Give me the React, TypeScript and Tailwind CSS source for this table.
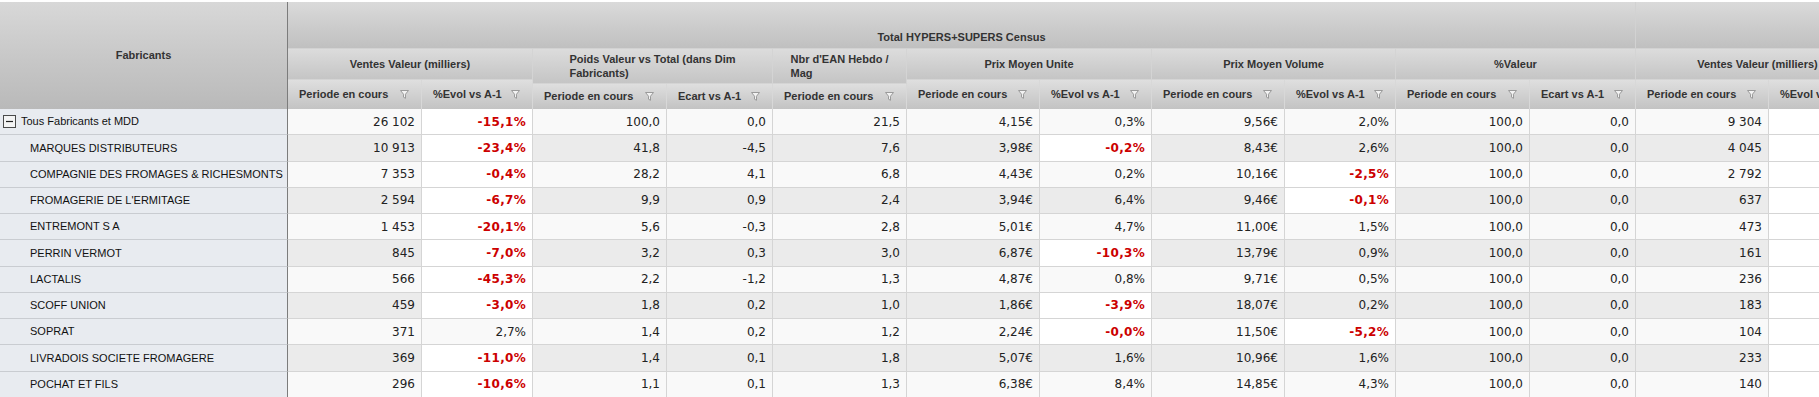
import React from "react";

const Funnel = () => (
  <svg width="9" height="9" viewBox="0 0 9 9" className="shrink-0">
    <path d="M0.5 0.5 H8.5 L5.5 4.2 V8.3 L3.5 7.2 V4.2 Z" fill="#f2f2f2" stroke="#9a9a9a" strokeWidth="1" strokeLinejoin="round" />
  </svg>
);

const MinusBox = () => (
  <svg width="13" height="13" viewBox="0 0 13 13" className="shrink-0">
    <rect x="0.5" y="0.5" width="12" height="12" fill="#f4f4f4" stroke="#4a4a4a" />
    <line x1="3" y1="6.5" x2="10" y2="6.5" stroke="#222" strokeWidth="1.2" />
  </svg>
);

const W = [
  "w-[134px]",
  "w-[111px]",
  "w-[134px]",
  "w-[106px]",
  "w-[134px]",
  "w-[133px]",
  "w-[112px]",
  "w-[133px]",
  "w-[111px]",
  "w-[134px]",
  "w-[106px]",
  "w-[133px]",
  "w-[111px]",
];

type Sub = { label: string; w: string };

const SubHead = ({ s }: { s: Sub }) => (
  <div
    className={`${s.w} shrink-0 h-full flex items-center justify-between pl-[11px] pr-[12px] bg-linear-to-b from-[#dfdfdf] to-[#c3c3c3] border-r border-[#d8d8d8]`}
  >
    <span className="whitespace-nowrap">{s.label}</span>
    <Funnel />
  </div>
);

const Group = ({
  title,
  subs,
  tall,
}: {
  title: React.ReactNode;
  subs: Sub[];
  tall?: boolean;
}) => (
  <div className="flex flex-col shrink-0">
    <div
      className={`${tall ? "h-[35px]" : "h-[31px]"} flex items-center justify-center px-2 bg-linear-to-b from-[#dcdcdc] to-[#c5c5c5] border-r border-b border-[#d4d4d4]`}
    >
      {title}
    </div>
    <div className={`${tall ? "h-[25px]" : "h-[29px]"} flex`}>
      {subs.map((s, i) => (
        <SubHead key={i} s={s} />
      ))}
    </div>
  </div>
);

type Cell = { v: string; r?: boolean };
const c = (v: string): Cell => ({ v });
const r = (v: string): Cell => ({ v, r: true });

const rows: { label: string; top?: boolean; cells: Cell[] }[] = [
  { label: "Tous Fabricants et MDD", top: true, cells: [c("26 102"), r("-15,1%"), c("100,0"), c("0,0"), c("21,5"), c("4,15€"), c("0,3%"), c("9,56€"), c("2,0%"), c("100,0"), c("0,0"), c("9 304")] },
  { label: "MARQUES DISTRIBUTEURS", cells: [c("10 913"), r("-23,4%"), c("41,8"), c("-4,5"), c("7,6"), c("3,98€"), r("-0,2%"), c("8,43€"), c("2,6%"), c("100,0"), c("0,0"), c("4 045")] },
  { label: "COMPAGNIE DES FROMAGES & RICHESMONTS", cells: [c("7 353"), r("-0,4%"), c("28,2"), c("4,1"), c("6,8"), c("4,43€"), c("0,2%"), c("10,16€"), r("-2,5%"), c("100,0"), c("0,0"), c("2 792")] },
  { label: "FROMAGERIE DE L'ERMITAGE", cells: [c("2 594"), r("-6,7%"), c("9,9"), c("0,9"), c("2,4"), c("3,94€"), c("6,4%"), c("9,46€"), r("-0,1%"), c("100,0"), c("0,0"), c("637")] },
  { label: "ENTREMONT S A", cells: [c("1 453"), r("-20,1%"), c("5,6"), c("-0,3"), c("2,8"), c("5,01€"), c("4,7%"), c("11,00€"), c("1,5%"), c("100,0"), c("0,0"), c("473")] },
  { label: "PERRIN VERMOT", cells: [c("845"), r("-7,0%"), c("3,2"), c("0,3"), c("3,0"), c("6,87€"), r("-10,3%"), c("13,79€"), c("0,9%"), c("100,0"), c("0,0"), c("161")] },
  { label: "LACTALIS", cells: [c("566"), r("-45,3%"), c("2,2"), c("-1,2"), c("1,3"), c("4,87€"), c("0,8%"), c("9,71€"), c("0,5%"), c("100,0"), c("0,0"), c("236")] },
  { label: "SCOFF UNION", cells: [c("459"), r("-3,0%"), c("1,8"), c("0,2"), c("1,0"), c("1,86€"), r("-3,9%"), c("18,07€"), c("0,2%"), c("100,0"), c("0,0"), c("183")] },
  { label: "SOPRAT", cells: [c("371"), c("2,7%"), c("1,4"), c("0,2"), c("1,2"), c("2,24€"), r("-0,0%"), c("11,50€"), r("-5,2%"), c("100,0"), c("0,0"), c("104")] },
  { label: "LIVRADOIS SOCIETE FROMAGERE", cells: [c("369"), r("-11,0%"), c("1,4"), c("0,1"), c("1,8"), c("5,07€"), c("1,6%"), c("10,96€"), c("1,6%"), c("100,0"), c("0,0"), c("233")] },
  { label: "POCHAT ET FILS", cells: [c("296"), r("-10,6%"), c("1,1"), c("0,1"), c("1,3"), c("6,38€"), c("8,4%"), c("14,85€"), c("4,3%"), c("100,0"), c("0,0"), c("140")] },
];

const P = "Periode en cours";
const E = "%Evol vs A-1";
const A = "Ecart vs A-1";

export default function App() {
  return (
    <div className="w-[1819px] h-[397px] overflow-hidden bg-white pt-[2px] font-['Liberation_Sans',Arial,sans-serif]">
      {/* Header */}
      <div className="flex text-[11px] font-bold text-[#333] h-[107px]">
        <div className="w-[288px] shrink-0 h-full flex items-center justify-center bg-linear-to-b from-[#d8d8d8] to-[#b9b9b9] border-r border-[#7c7c7c]">
          Fabricants
        </div>
        <div className="flex flex-col shrink-0">
          <div className="h-[47px] flex items-end justify-center pb-[3px] bg-linear-to-b from-[#dadada] to-[#c0c0c0] border-r border-b border-[#d2d2d2]">
            Total HYPERS+SUPERS Census
          </div>
          <div className="flex">
            <Group title="Ventes Valeur (milliers)" subs={[{ label: P, w: W[0] }, { label: E, w: W[1] }]} />
            <Group
              tall
              title={
                <span className="text-left leading-[14px]">
                  Poids Valeur vs Total (dans Dim
                  <br />
                  Fabricants)
                </span>
              }
              subs={[{ label: P, w: W[2] }, { label: A, w: W[3] }]}
            />
            <Group
              tall
              title={
                <span className="text-left leading-[14px]">
                  Nbr d'EAN Hebdo /
                  <br />
                  Mag
                </span>
              }
              subs={[{ label: P, w: W[4] }]}
            />
            <Group title="Prix Moyen Unite" subs={[{ label: P, w: W[5] }, { label: E, w: W[6] }]} />
            <Group title="Prix Moyen Volume" subs={[{ label: P, w: W[7] }, { label: E, w: W[8] }]} />
            <Group title="%Valeur" subs={[{ label: P, w: W[9] }, { label: A, w: W[10] }]} />
          </div>
        </div>
        <div className="flex flex-col shrink-0">
          <div className="h-[47px] bg-linear-to-b from-[#dadada] to-[#c0c0c0] border-b border-[#d2d2d2]" />
          <div className="flex">
            <Group title="Ventes Valeur (milliers)" subs={[{ label: P, w: W[11] }, { label: E, w: W[12] }]} />
          </div>
        </div>
      </div>

      {/* Body */}
      <div className="flex flex-col">
        {rows.map((row, ri) => {
          const odd = ri % 2 === 0;
          return (
            <div key={ri} className="flex h-[26.25px]">
              <div className="w-[288px] shrink-0 h-full flex items-center bg-[#e8ebf0] border-r border-b border-r-[#7c7c7c] border-b-[#c9ccd1] text-[11px] text-[#111]">
                {row.top ? (
                  <div className="flex items-center gap-[5px] pl-[3px]">
                    <MinusBox />
                    <span>{row.label}</span>
                  </div>
                ) : (
                  <span className="pl-[30px] whitespace-nowrap">{row.label}</span>
                )}
              </div>
              {row.cells.map((cell, ci) => (
                <div
                  key={ci}
                  className={`${W[ci]} shrink-0 h-full flex items-center justify-end pr-[6px] border-r border-b border-[#d5d5d5] font-['DejaVu_Sans',Verdana,sans-serif] text-[12px] ${
                    cell.r
                      ? "bg-white text-[#cc0000] font-bold tracking-[0.3px]"
                      : odd
                      ? "bg-[#f9f9f9] text-[#222]"
                      : "bg-[#ebebeb] text-[#222]"
                  }`}
                >
                  {cell.v}
                </div>
              ))}
              <div className={`${W[12]} shrink-0 h-full bg-white border-r border-b border-[#d5d5d5]`} />
            </div>
          );
        })}
      </div>
    </div>
  );
}
